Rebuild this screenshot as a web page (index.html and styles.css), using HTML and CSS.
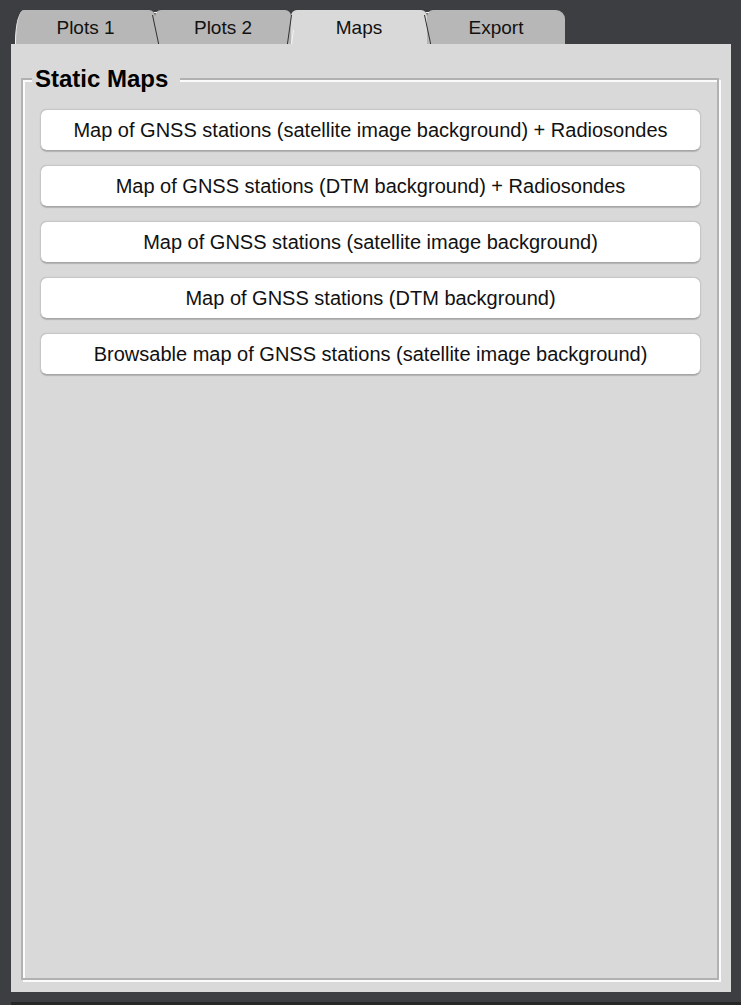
FILE: index.html
```html
<!DOCTYPE html>
<html lang="en">
<head>
<meta charset="utf-8">
<title>Maps</title>
<link rel="stylesheet" href="styles.css">
</head>
<body>
<div class="window">
  <div class="tabs">
    <div class="tab tab-first">Plots 1</div>
    <div class="tab tab-sep">Plots 2</div>
    <div class="tab tab-sep tab-active">Maps</div>
    <div class="tab tab-sep tab-last">Export</div>
  </div>
  <div class="panel">
    <fieldset class="group">
      <legend class="group-title">Static Maps</legend>
      <div class="buttons">
        <button class="btn">Map of GNSS stations (satellite image background) + Radiosondes</button>
        <button class="btn">Map of GNSS stations (DTM background) + Radiosondes</button>
        <button class="btn">Map of GNSS stations (satellite image background)</button>
        <button class="btn">Map of GNSS stations (DTM background)</button>
        <button class="btn">Browsable map of GNSS stations (satellite image background)</button>
      </div>
    </fieldset>
  </div>
  <div class="footer"></div>
</div>
</body>
</html>
```

FILE: styles.css
```css
html, body {
  margin: 0;
  padding: 0;
}
body {
  background: #3d3e41;
  width: 741px;
  height: 1005px;
  overflow: hidden;
  font-family: "Liberation Sans", Arial, sans-serif;
}
.window {
  display: flex;
  flex-direction: column;
  padding-top: 10px;
  padding-left: 11px;
  height: 1005px;
  box-sizing: border-box;
}
.tabs {
  display: flex;
  height: 34px;
  margin-left: 4px;
}
.tab {
  position: relative;
  height: 34px;
  line-height: 35px;
  text-align: center;
  font-size: 19px;
  color: #111;
  background: #b7b7b7;
  border-radius: 6px 6px 0 0;
  width: 136px;
}
.tab-first {
  width: 140px;
  border-left: 1.5px solid #f2f2f2;
  border-top-left-radius: 9px 32px;
  box-sizing: border-box;
  padding-left: 0;
}
.tab-last {
  width: 138px;
  border-top-right-radius: 9px;
}
.tab-active {
  background: #d9d9d9;
}
.tab-sep::before {
  content: "";
  position: absolute;
  left: -3px;
  top: 5px;
  width: 1.2px;
  height: 29px;
  background: #303030;
  transform-origin: top left;
  transform: skewX(12deg);
}
.tab-sep::after {
  content: "";
  position: absolute;
  left: -1px;
  top: 2px;
  width: 3px;
  height: 1.2px;
  background: #f4f4f4;
}
.tab-active::before {
  left: 0;
  transform: skewX(-8deg);
}
.tab-active::after {
  left: 1px;
  top: 20px;
  width: 1.2px;
  height: 14px;
  transform: skewX(-8deg);
}
.panel {
  width: 720px;
  height: 948px;
  box-sizing: border-box;
  background: #d9d9d9;
  padding: 21px 12px 12px 10px;
  display: flex;
  flex-direction: column;
}
.group {
  flex: 1;
  margin: 0;
  min-width: 0;
  border: 2px solid #b1b1b1;
  box-shadow: inset 2px 2px 0 #fbfbfb, 2px 2px 0 #fbfbfb;
  padding: 16px 16px 0 17px;
}
.group-title {
  margin-left: -8px;
  padding: 0 12px 0 3px;
  background: #d9d9d9;
  font-size: 24px;
  line-height: 28px;
  font-weight: bold;
  color: #000;
}
.buttons {
  display: flex;
  flex-direction: column;
  gap: 14px;
}
.btn {
  height: 42px;
  margin: 0;
  padding: 0;
  background: #fff;
  border: 1px solid #c6c6c6;
  border-bottom-color: #a6a6a6;
  border-radius: 7px;
  box-shadow: 0 0.5px 1px rgba(0, 0, 0, 0.18);
  font-family: "Liberation Sans", Arial, sans-serif;
  font-size: 20px;
  color: #111;
  text-align: center;
}
.footer {
  margin-top: 10px;
  height: 3px;
  background: #262627;
}
```
